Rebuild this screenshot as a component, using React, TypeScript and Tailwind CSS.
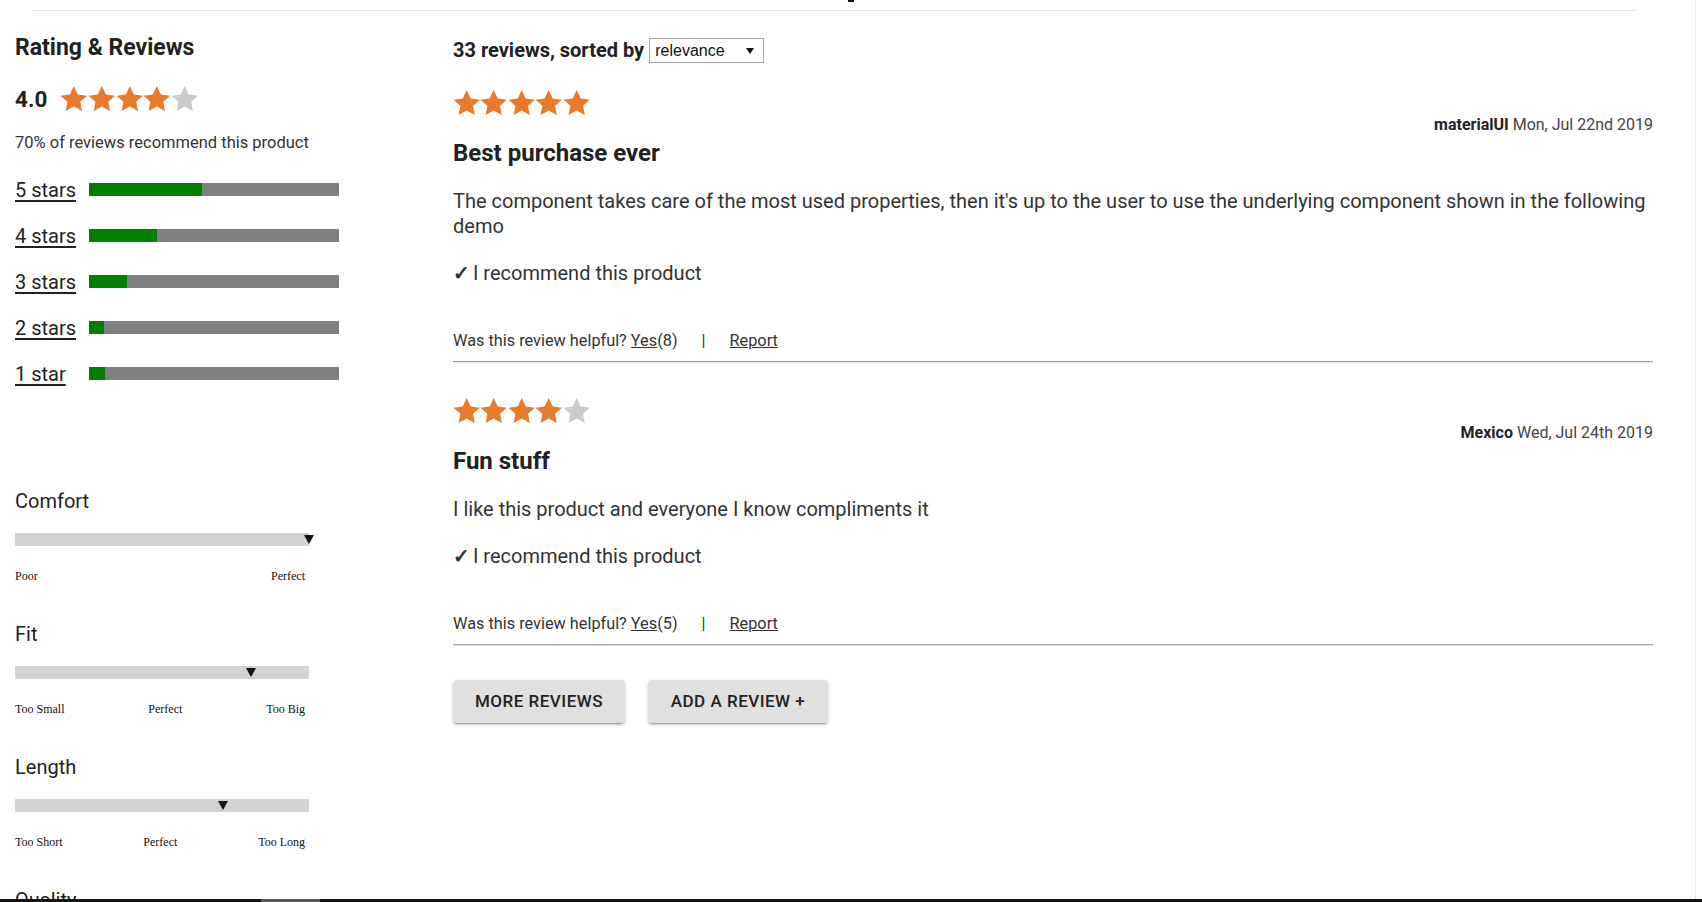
import React from 'react'

const ORANGE = '#e9792b'
const GREY = '#cbcbcb'

function Star({ on, w }: { on: boolean; w: number }) {
  return (
    <svg
      width={w}
      height={26}
      viewBox="1 1.5 22 21"
      preserveAspectRatio="none"
      className="shrink-0"
    >
      <polygon
        points="12,1.6 15.2,8.4 22.6,9.3 17.1,14.3 18.5,21.6 12,18 5.5,21.6 6.9,14.3 1.4,9.3 8.8,8.4"
        fill={on ? ORANGE : GREY}
      />
    </svg>
  )
}

function Stars({ value, w = 27.4 }: { value: number; w?: number }) {
  return (
    <div className="flex h-[26px] items-center">
      {[1, 2, 3, 4, 5].map((i) => (
        <Star key={i} on={i <= value} w={w} />
      ))}
    </div>
  )
}

const breakdown = [
  { label: '5 stars', pct: 45 },
  { label: '4 stars', pct: 27 },
  { label: '3 stars', pct: 15 },
  { label: '2 stars', pct: 6 },
  { label: '1 star', pct: 6.5 }
]

const scales = [
  { name: 'Comfort', value: 100, labels: ['Poor', 'Perfect'] },
  { name: 'Fit', value: 80.3, labels: ['Too Small', 'Perfect', 'Too Big'] },
  { name: 'Length', value: 70.7, labels: ['Too Short', 'Perfect', 'Too Long'] },
  { name: 'Quality', value: 60, labels: ['Poor', 'Perfect'] }
]

const reviews = [
  {
    rating: 5,
    author: 'materialUI',
    date: 'Mon, Jul 22nd 2019',
    title: 'Best purchase ever',
    body: "The component takes care of the most used properties, then it's up to the user to use the underlying component shown in the following demo",
    yes: 8
  },
  {
    rating: 4,
    author: 'Mexico',
    date: 'Wed, Jul 24th 2019',
    title: 'Fun stuff',
    body: 'I like this product and everyone I know compliments it',
    yes: 5
  }
]

function Scale({ s, first }: { s: (typeof scales)[number]; first: boolean }) {
  return (
    <div className={first ? 'mt-[92px]' : 'mt-[39px]'}>
      <p className="text-[20px] leading-[24px] text-[#222]">{s.name}</p>
      <div className="relative mt-[20px] h-[13px] w-[294px] bg-[#d3d3d3]">
        <div
          className="absolute top-[2px] h-0 w-0 border-x-[5px] border-t-[9px] border-x-transparent border-t-[#111]"
          style={{ left: `calc(${s.value}% - 5px)` }}
        />
      </div>
      <div className="mt-[23px] flex w-[290px] justify-between font-['Liberation_Serif',serif] text-[12px] leading-[14px] text-[#111]">
        {s.labels.map((l, i) => (
          <span key={i}>{l}</span>
        ))}
      </div>
    </div>
  )
}

function Review({ r, first }: { r: (typeof reviews)[number]; first: boolean }) {
  return (
    <div className={first ? 'mt-[27px]' : 'mt-[35px]'}>
      <Stars value={r.rating} />
      <p className="text-right text-[16px] leading-[18px] text-[#444]">
        <b className="font-bold text-[#222]">{r.author}</b> {r.date}
      </p>
      <h3 className="mt-[5px] text-[24px] font-bold leading-[28px] text-[#212121]">
        {r.title}
      </h3>
      <p className="mt-[22px] text-[20px] leading-[25px] text-[#333]">
        {r.body}
      </p>
      <p className="mt-[22px] text-[20px] leading-[25px] text-[#333]">
        <span className="mr-[-2px] font-semibold">✓</span> I recommend this
        product
      </p>
      <p className="mt-[45px] text-[16.3px] leading-[20px] text-[#333]">
        Was this review helpful? <span className="underline">Yes</span>(
        {r.yes})<span className="mx-[24px]">|</span>
        <span className="underline">Report</span>
      </p>
      <div className="mt-[10px] h-[2px] border-t border-b border-t-[#a0a0a0] border-b-[#e6e6e6]" />
    </div>
  )
}

export default function App() {
  return (
    <div className="flex h-[902px] w-[1702px] flex-col overflow-hidden bg-white font-['Roboto',sans-serif]">
      <div className="flex min-h-0 flex-1">
        <div className="w-[1695px] overflow-hidden">
          {/* cut-off heading above */}
          <div className="flex h-[2px] pl-[848px]">
            <div className="h-[2px] w-[6px] bg-[#111]" />
          </div>
          <div className="mt-[8px] ml-[33px] w-[1602px] border-t border-[#e3e3e3]" />

          <div className="flex">
            {/* left: summary */}
            <aside className="ml-[15px] w-[330px] shrink-0">
              <h2 className="mt-[23px] text-[23px] font-bold leading-[28px] text-[#212121]">
                Rating &amp; Reviews
              </h2>
              <div className="mt-[24px] flex h-[26px] items-center gap-[13px]">
                <span className="text-[22.5px] font-bold leading-[26px] text-[#212121]">
                  4.0
                </span>
                <Stars value={4} w={27.6} />
              </div>
              <p className="mt-[21px] text-[16.5px] leading-[20px] text-[#333]">
                70% of reviews recommend this product
              </p>
              <div className="mt-[13.5px]">
                {breakdown.map((b) => (
                  <div key={b.label} className="flex h-[46px] items-center">
                    <span className="w-[74px] text-[20px] leading-[20px] text-[#222] underline underline-offset-[3px]">
                      {b.label}
                    </span>
                    <div className="h-[13px] w-[250px] bg-[#808080]">
                      <div
                        className="h-full bg-[#008000]"
                        style={{ width: `${b.pct}%` }}
                      />
                    </div>
                  </div>
                ))}
              </div>
              {scales.map((s, i) => (
                <Scale key={s.name} s={s} first={i === 0} />
              ))}
            </aside>

            {/* right: review list */}
            <section className="ml-[108px] w-[1200px] shrink-0">
              <div className="mt-[27px] flex h-[25px] items-center gap-[5px]">
                <span className="text-[20px] font-bold leading-[25px] text-[#212121]">
                  33 reviews, sorted by
                </span>
                <div className="flex h-[25px] w-[115px] items-center border border-[#a4a4a4] pl-[5px] font-['Liberation_Sans',sans-serif] text-[16px] text-[#111]">
                  relevance
                  <span className="ml-auto mr-[9px] h-0 w-0 border-x-[4px] border-t-[6px] border-x-transparent border-t-[#111]" />
                </div>
              </div>
              {reviews.map((r, i) => (
                <Review key={r.title} r={r} first={i === 0} />
              ))}
              <div className="mt-[34px] flex gap-[23px]">
                <button className="h-[43px] w-[172px] rounded-[4px] bg-[#e0e0e0] text-[17px] font-medium uppercase tracking-[0.5px] text-[#222] shadow-[0px_3px_1px_-2px_rgba(0,0,0,0.2),0px_2px_2px_0px_rgba(0,0,0,0.14),0px_1px_5px_0px_rgba(0,0,0,0.12)]">
                  More reviews
                </button>
                <button className="h-[43px] w-[180px] rounded-[4px] bg-[#e0e0e0] text-[17px] font-medium uppercase tracking-[0.5px] text-[#222] shadow-[0px_3px_1px_-2px_rgba(0,0,0,0.2),0px_2px_2px_0px_rgba(0,0,0,0.14),0px_1px_5px_0px_rgba(0,0,0,0.12)]">
                  Add a review +
                </button>
              </div>
            </section>
          </div>
        </div>
        <div className="w-px border-l border-dotted border-[#d8d8d8]" />
      </div>
      <div className="flex h-[3px] shrink-0 bg-[#111]">
        <div className="ml-[261px] w-[59px] bg-[#555]" />
      </div>
    </div>
  )
}
